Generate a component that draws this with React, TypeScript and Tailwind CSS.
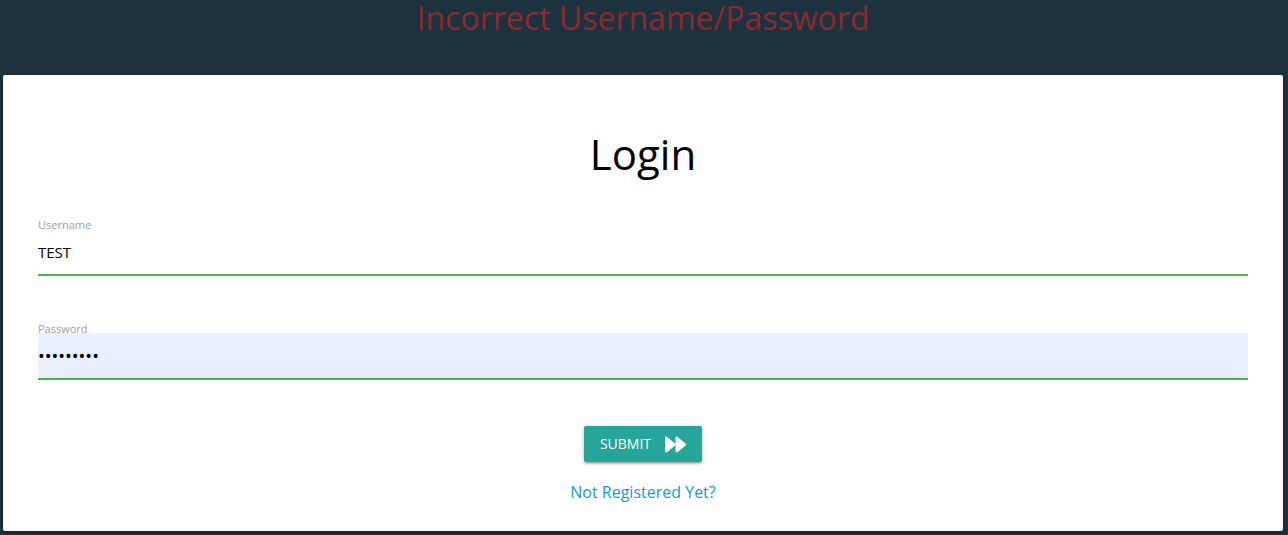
import { useState } from "react";
import type { FormEvent } from "react";
import { FaForward } from "react-icons/fa";

type FieldProps = {
  id: string;
  label: string;
  type: "text" | "password";
  value: string;
  inputClass: string;
  onChange: (value: string) => void;
};

function Field({ id, label, type, value, inputClass, onChange }: FieldProps) {
  return (
    <div className="flex flex-col">
      <label htmlFor={id} className="h-3 text-[11px] leading-4 text-[#9e9e9e]">
        {label}
      </label>
      <input
        id={id}
        type={type}
        value={value}
        onChange={(e) => onChange(e.target.value)}
        className={`h-[47px] w-full border-b-2 border-[#4caf50] text-black outline-none ${inputClass}`}
      />
    </div>
  );
}

export default function App() {
  const [username, setUsername] = useState("TEST");
  const [password, setPassword] = useState("password1");

  const submit = (e: FormEvent) => e.preventDefault();

  return (
    <main className="min-h-screen bg-[#1c323e] pr-[5px] pb-1 pl-[3px] font-['Open_Sans','Noto_Sans',sans-serif]">
      <p role="alert" className="h-[75px] text-center text-[32px] leading-9 text-[#8b2a2d]">
        Incorrect Username/Password
      </p>
      <form
        onSubmit={submit}
        className="rounded-xs bg-white px-[35px] pt-[52px] pb-[27px] shadow-[0_2px_2px_rgba(0,0,0,0.14),0_3px_1px_-2px_rgba(0,0,0,0.12),0_1px_5px_rgba(0,0,0,0.2)]"
      >
        <h1 className="text-center text-[42px] leading-[54px] text-black">Login</h1>
        <div className="mt-9 flex flex-col gap-[45px]">
          <Field
            id="username"
            label="Username"
            type="text"
            value={username}
            inputClass="bg-transparent text-[15px]"
            onChange={setUsername}
          />
          <Field
            id="password"
            label="Password"
            type="password"
            value={password}
            inputClass="bg-[#e8f0fe] text-lg"
            onChange={setPassword}
          />
        </div>
        <div className="mt-[46px] flex flex-col items-center gap-[18px]">
          <button
            type="submit"
            className="flex h-9 items-center gap-[14px] rounded-xs bg-[#26a69a] px-4 text-sm text-white uppercase shadow-[0_2px_2px_rgba(0,0,0,0.14),0_3px_1px_-2px_rgba(0,0,0,0.12),0_1px_5px_rgba(0,0,0,0.2)]"
          >
            Submit
            <FaForward size={21} aria-hidden="true" />
          </button>
          <a href="#register" className="text-base leading-6 text-[#2196d3]">
            Not Registered Yet?
          </a>
        </div>
      </form>
    </main>
  );
}
